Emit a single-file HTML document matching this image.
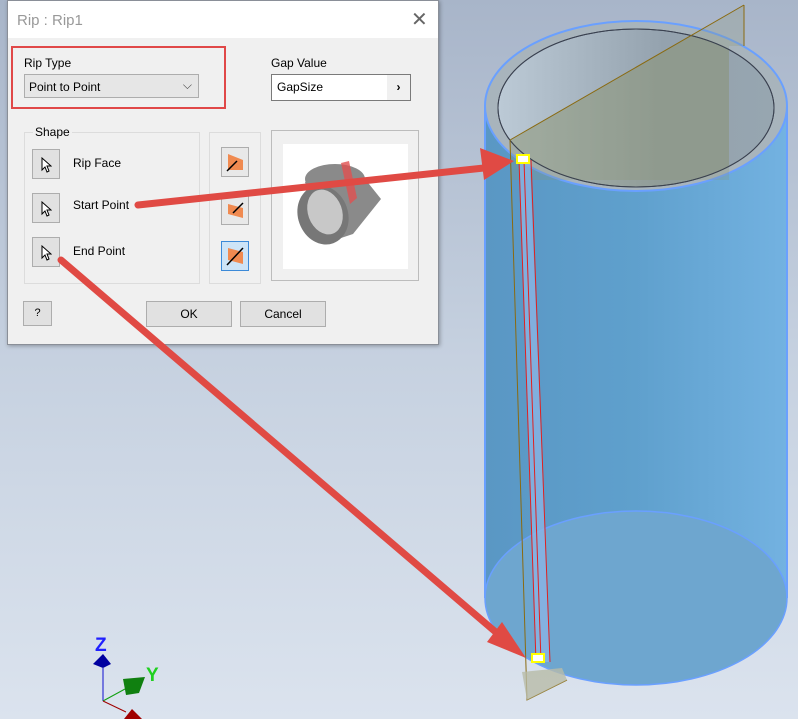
<!DOCTYPE html>
<html><head><meta charset="utf-8"><style>
body{margin:0;width:798px;height:719px;overflow:hidden;position:relative;font-family:"Liberation Sans",sans-serif;background:linear-gradient(#a8b5c9,#c6d1e0 50%,#dbe3ee);}
.a{position:absolute}
.dlg{left:7px;top:0;width:432px;height:345px;background:#f0f0f0;border:1px solid #8a8f98;box-sizing:border-box;box-shadow:1px 1px 4px rgba(0,0,0,.3)}
.t{font-size:12px;color:#000}
.btn{background:#e1e1e1;border:1px solid #adadad;box-sizing:border-box}
.cur{display:block;margin:7px auto 0}
</style></head><body>
<svg class="a" style="left:0;top:0" width="798" height="719">
<defs><linearGradient id="cy" x1="0" x2="1"><stop offset="0" stop-color="#5a97c4"/><stop offset=".5" stop-color="#5fa0cd"/><stop offset="1" stop-color="#73b2e1"/></linearGradient>
<linearGradient id="in" x1="0" x2="1"><stop offset="0" stop-color="#bccad6"/><stop offset=".6" stop-color="#94a2ae"/><stop offset="1" stop-color="#97a6b0"/></linearGradient>
<clipPath id="ie"><ellipse cx="636" cy="108" rx="138" ry="79"/></clipPath></defs>
<rect x="485" y="106" width="302" height="492" fill="url(#cy)"/>
<ellipse cx="636" cy="598" rx="151" ry="87" fill="#6ea6cf" stroke="#6aa0ff" stroke-width="1.5"/>
<line x1="485" y1="106" x2="485" y2="598" stroke="#6aa0ff" stroke-width="2"/>
<line x1="787" y1="106" x2="787" y2="598" stroke="#6aa0ff" stroke-width="2"/>
<ellipse cx="636" cy="106" rx="151" ry="85" fill="#a8b4bc" stroke="#6aa0ff" stroke-width="2"/>
<ellipse cx="636" cy="108" rx="138" ry="79" fill="url(#in)" stroke="#3a4150" stroke-width="1"/>
<path d="M510 140 L744 5 L729 45 L729 200 L510 200 Z" fill="#8a9270" opacity=".35" clip-path="url(#ie)"/>
<path d="M510 140 L744 5 L744 46 L729 46 L729 180 L510 180 Z" fill="#8a9270" opacity=".25"/>
<ellipse cx="636" cy="108" rx="138" ry="79" fill="none" stroke="#3a4150" stroke-width="1"/>
<line x1="510" y1="140" x2="744" y2="5" stroke="#8a6a10" stroke-width="1"/>
<line x1="744" y1="5" x2="744" y2="46" stroke="#8a6a10"/>
<path d="M510 140 L527 700 L567 680" fill="none" stroke="#8a6a10" stroke-width="1"/>
<path d="M522 672 L527 700 L567 680 L562 668 Z" fill="#b8bca8" opacity=".8"/>
<path d="M519 160 L530 160 L550 662 L536 662 Z" fill="#8ab4e4" opacity=".8"/>
<path d="M519 160 L536 662 M524 160 L541 662 M531 160 L550 662" stroke="#e02020" stroke-width="1" fill="none"/>
<rect x="517" y="155" width="12" height="8" fill="#fff" stroke="#ff0" stroke-width="2"/>
<rect x="532" y="654" width="12" height="8" fill="#fff" stroke="#ff0" stroke-width="2"/>
<line x1="103" y1="668" x2="103" y2="701" stroke="#1010d0" stroke-width="1"/>
<line x1="103" y1="701" x2="125" y2="689" stroke="#10a010"/>
<line x1="103" y1="701" x2="126" y2="712" stroke="#a00000"/>
<path d="M103 654 L111 664 L103 668 L93 664 Z" fill="#0000a0"/>
<path d="M123 679 L145 677 L139 693 L126 695 Z" fill="#108010"/>
<path d="M124 719 L132 709 L142 719 Z" fill="#a00000"/>
<text x="95" y="651" font-size="19" font-family="Liberation Sans" font-weight="bold" fill="#2020ff">Z</text>
<text x="146" y="681" font-size="19" font-family="Liberation Sans" font-weight="bold" fill="#20d020">Y</text>
</svg>
<div class="a dlg">
 <div class="a" style="left:0;top:0;width:430px;height:37px;background:#fff"></div>
 <div class="a" style="left:9px;top:11px;font-size:15px;color:#999">Rip : Rip1</div>
 <div class="a" style="left:403px;top:6px;font-size:20px;color:#666">✕</div>
 <div class="a" style="left:3px;top:45px;width:215px;height:63px;border:2px solid #e04848;box-sizing:border-box"></div>
 <div class="a t" style="left:16px;top:55px">Rip Type</div>
 <div class="a btn t" style="left:16px;top:73px;width:175px;height:24px;padding:5px 4px;background:#e6e6e6">Point to Point<span class="a" style="right:6px;top:3px;color:#444">⌵</span></div>
 <div class="a t" style="left:263px;top:55px">Gap Value</div>
 <div class="a t" style="left:263px;top:73px;width:140px;height:27px;border:1px solid #7a7a7a;background:#fff;box-sizing:border-box;padding:5px 5px">GapSize<span class="a" style="right:0;top:0;width:23px;height:25px;background:#f0f0f0;text-align:center;line-height:25px;font-weight:bold">›</span></div>
 <div class="a" style="left:16px;top:131px;width:174px;height:150px;border:1px solid #dcdcdc"></div>
 <div class="a t" style="left:25px;top:124px;background:#f0f0f0;padding:0 2px">Shape</div>
 <div class="a btn" style="left:24px;top:148px;width:28px;height:30px"><svg class="cur" width="12" height="16"><path d="M2 1 L2 13 L5 10 L7 15 L9 14 L7 9 L11 9 Z" fill="#fff" stroke="#000"/></svg></div>
 <div class="a btn" style="left:24px;top:192px;width:28px;height:30px"><svg class="cur" width="12" height="16"><path d="M2 1 L2 13 L5 10 L7 15 L9 14 L7 9 L11 9 Z" fill="#fff" stroke="#000"/></svg></div>
 <div class="a btn" style="left:24px;top:236px;width:28px;height:30px"><svg class="cur" width="12" height="16"><path d="M2 1 L2 13 L5 10 L7 15 L9 14 L7 9 L11 9 Z" fill="#fff" stroke="#000"/></svg></div>
 <div class="a t" style="left:65px;top:155px">Rip Face</div>
 <div class="a t" style="left:65px;top:197px">Start Point</div>
 <div class="a t" style="left:65px;top:243px">End Point</div>
 <div class="a" style="left:201px;top:131px;width:50px;height:150px;border:1px solid #dcdcdc"></div>
 <div class="a btn" style="left:213px;top:146px;width:28px;height:30px;background:#e8e8e8"><svg width="26" height="28"><path d="M6 6 L21 12 L21 22 L6 22 Z" fill="#f08a50"/><line x1="5" y1="23" x2="15" y2="13" stroke="#000" stroke-width="1.5"/></svg></div>
 <div class="a btn" style="left:213px;top:194px;width:28px;height:30px;background:#e8e8e8"><svg width="26" height="28"><path d="M6 8 L21 12 L21 22 L6 18 Z" fill="#f08a50"/><line x1="11" y1="17" x2="21" y2="7" stroke="#000" stroke-width="1.5"/></svg></div>
 <div class="a" style="left:213px;top:240px;width:28px;height:30px;background:#cde4f7;border:1px solid #3c8ad8;box-sizing:border-box"><svg width="26" height="28"><path d="M6 6 L21 10 L21 22 L6 18 Z" fill="#f08a50"/><line x1="5" y1="23" x2="21" y2="6" stroke="#000" stroke-width="1.5"/></svg></div>
 <div class="a" style="left:263px;top:129px;width:148px;height:151px;border:1px solid #bcbcbc;box-sizing:border-box"></div>
 <div class="a" style="left:275px;top:143px;width:125px;height:125px;background:#fff">
  <svg width="125" height="125"><ellipse cx="52" cy="35" rx="30" ry="15" fill="#8a8a8a"/><path d="M22 38 L78 30 L98 55 L70 90 L40 100 Z" fill="#8a8a8a"/><ellipse cx="40" cy="71" rx="25" ry="30" fill="#777" transform="rotate(-20 40 71)"/><ellipse cx="42" cy="68" rx="17" ry="23" fill="#c8c8c8" transform="rotate(-20 42 68)"/><path d="M58 19 L66 17 L74 54 L67 60 Z" fill="#e05050" opacity=".8"/></svg>
 </div>
 <div class="a btn" style="left:15px;top:300px;width:29px;height:25px;text-align:center;font-size:11px;line-height:23px">?</div>
 <div class="a btn t" style="left:138px;top:300px;width:86px;height:26px;text-align:center;line-height:24px">OK</div>
 <div class="a btn t" style="left:232px;top:300px;width:86px;height:26px;text-align:center;line-height:24px">Cancel</div>
</div>
<svg class="a" style="left:0;top:0" width="798" height="719">
<g stroke="#e04a44" stroke-width="7" stroke-linecap="round" fill="none">
<line x1="138" y1="205" x2="484" y2="168"/>
<line x1="61" y1="260" x2="498" y2="634"/>
</g>
<path d="M514 161 L480 148 L484 180 Z" fill="#e04a44"/>
<path d="M526 658 L502 622 L487 642 Z" fill="#e04a44"/>
</svg>
</body></html>
